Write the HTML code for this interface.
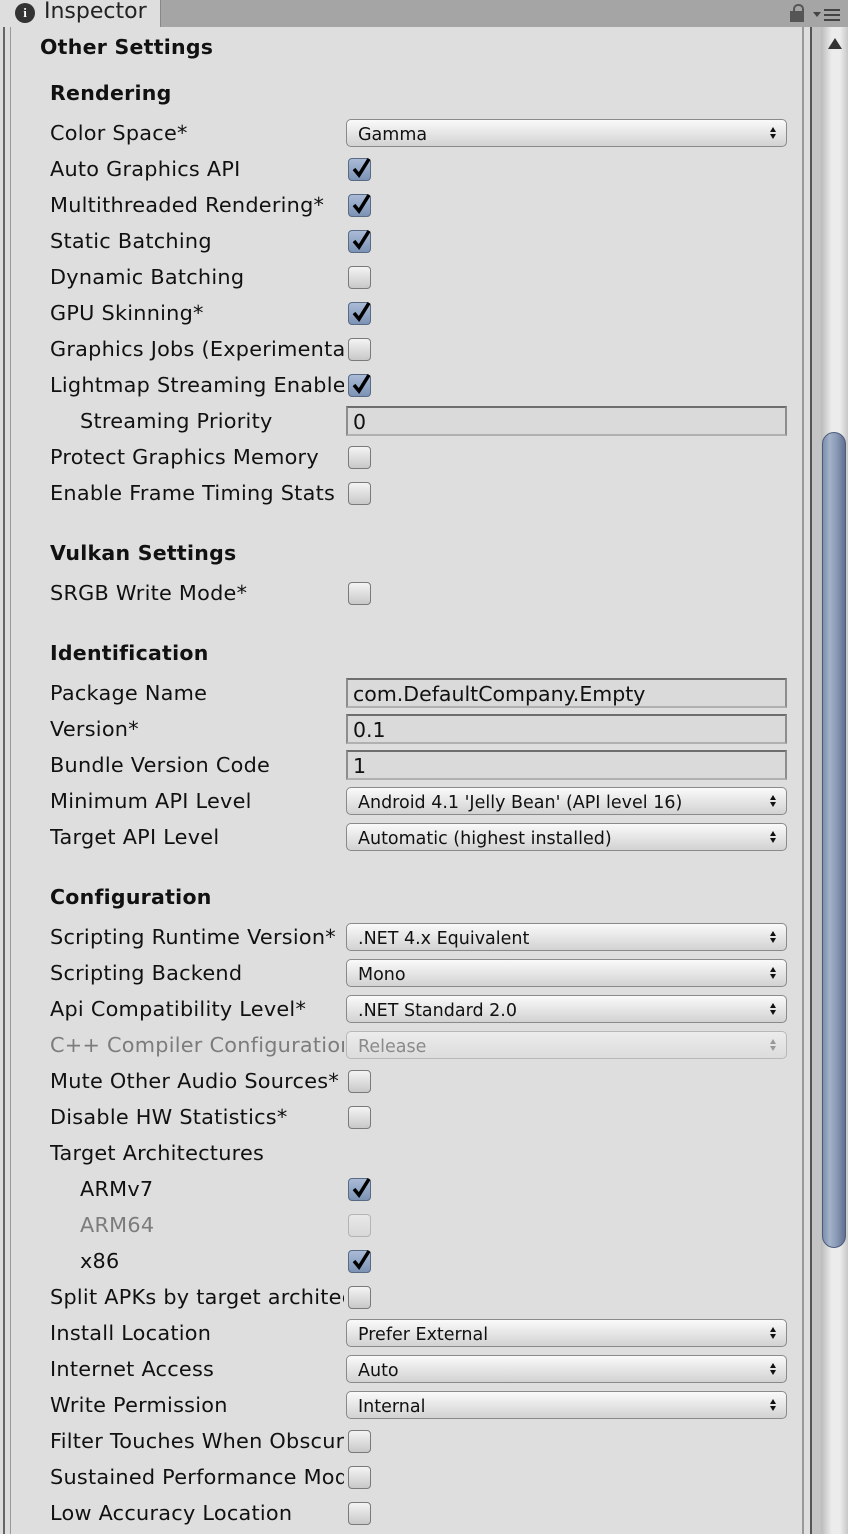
<!DOCTYPE html><html><head><style>
body{margin:0;width:848px;height:1534px;overflow:hidden;background:#dedede;font-family:"DejaVu Sans","Liberation Sans",sans-serif;position:relative}
.a{position:absolute}
.l{position:absolute;left:50px;width:294px;overflow:hidden;white-space:nowrap;font-size:20.8px;letter-spacing:0.25px;color:#111;height:32px;line-height:32px}
.b{font-weight:bold;font-size:20.5px}
.d{color:#7c7c7c}
.cb{position:absolute;left:348px;width:21px;height:21px;border:1px solid #7a7a7a;border-radius:4px;background:linear-gradient(#f4f4f4,#c8c8c8)}
.cb.on{background:linear-gradient(#a9bbd6,#7d93b6);border-color:#5a6a85}
.cb.dis{border-color:#b4b4b4;background:linear-gradient(#e8e8e8,#d8d8d8)}
.cb svg{position:absolute;left:1px;top:-3px}
.dd{position:absolute;left:346px;width:428px;height:26px;border:1px solid #8a8a8a;border-radius:5px;background:linear-gradient(#fafafa,#e2e2e2 60%,#d2d2d2);font-size:17.5px;line-height:30px;padding-left:11px;color:#111;overflow:hidden}
.dd.dis{color:#8a8a8a;border-color:#b8b8b8;background:linear-gradient(#ececec,#dcdcdc)}
.dd:after{content:"";position:absolute;right:10px;top:7px;width:0;height:0;border-left:3.5px solid transparent;border-right:3.5px solid transparent;border-bottom:5px solid #111}
.dd:before{content:"";position:absolute;right:10px;top:14px;width:0;height:0;border-left:3.5px solid transparent;border-right:3.5px solid transparent;border-top:5px solid #111}
.dd.dis:after{border-bottom-color:#999}.dd.dis:before{border-top-color:#999}
.tf{position:absolute;left:346px;width:432px;height:26px;border:2px solid #8d8d8d;border-top-color:#6e6e6e;border-bottom-color:#b0b0b0;background:#dadada;font-size:20.5px;line-height:28px;padding-left:5px;color:#111;overflow:hidden}
</style></head><body>
<div class="a" style="left:0;top:0;width:848px;height:27px;background:#a5a5a5"></div>
<div class="a" style="left:0;top:0;width:160px;height:27px;background:#dedede;border-right:1px solid #888"></div>
<div class="a" style="left:15px;top:3px;width:20px;height:20px;border-radius:50%;background:#333;color:#fff;font:bold 13px 'Liberation Serif',serif;text-align:center;line-height:20px">i</div>
<div class="a" style="left:44px;top:-2px;font-size:22px;color:#222;line-height:28px">Inspector</div>
<div class="a" style="left:790px;top:11px;width:14px;height:11px;background:#555"></div>
<div class="a" style="left:793px;top:4px;width:7px;height:8px;border:2px solid #555;border-bottom:none;border-radius:5px 5px 0 0"></div>
<div class="a" style="left:813px;top:12px;width:0;height:0;border-left:4px solid transparent;border-right:4px solid transparent;border-top:5px solid #444"></div>
<div class="a" style="left:824px;top:9px;width:16px;height:2px;background:#444;box-shadow:0 5px 0 #444,0 10px 0 #444"></div>
<div class="a" style="left:3px;top:27px;width:2px;height:1507px;background:#666"></div>
<div class="a" style="left:10px;top:27px;width:1px;height:1507px;background:#999"></div>
<div class="a" style="left:802px;top:27px;width:2px;height:1507px;background:#999"></div>
<div class="a" style="left:810px;top:27px;width:2px;height:1507px;background:#555"></div>
<div class="a" style="left:812px;top:27px;width:9px;height:1507px;background:#c4c4c4"></div>
<div class="a" style="left:821px;top:27px;width:27px;height:1507px;background:linear-gradient(90deg,#bbb,#ececec 40%,#ececec 70%,#c8c8c8)"></div>
<div class="a" style="left:828px;top:38px;width:0;height:0;border-left:7px solid transparent;border-right:7px solid transparent;border-bottom:11px solid #333"></div>
<div class="a" style="left:822px;top:432px;width:22px;height:814px;border:1px solid #4c5d7c;border-radius:12px;background:linear-gradient(90deg,#7b8dab,#a3b2c9 30%,#8c9cb7 60%,#5f7091)"></div>
<div class="l b" style="left:40px;top:31px">Other Settings</div>
<div class="l b" style="top:77px">Rendering</div>
<div class="l" style="top:117px">Color Space*</div><div class="dd" style="top:119px">Gamma</div>
<div class="l" style="top:153px">Auto Graphics API</div><div class="cb on" style="top:158px"><svg width="22" height="24"><path d="M4 13 L9 19 L19 3" stroke="#000" stroke-width="3.5" fill="none"/></svg></div>
<div class="l" style="top:189px">Multithreaded Rendering*</div><div class="cb on" style="top:194px"><svg width="22" height="24"><path d="M4 13 L9 19 L19 3" stroke="#000" stroke-width="3.5" fill="none"/></svg></div>
<div class="l" style="top:225px">Static Batching</div><div class="cb on" style="top:230px"><svg width="22" height="24"><path d="M4 13 L9 19 L19 3" stroke="#000" stroke-width="3.5" fill="none"/></svg></div>
<div class="l" style="top:261px">Dynamic Batching</div><div class="cb" style="top:266px"></div>
<div class="l" style="top:297px">GPU Skinning*</div><div class="cb on" style="top:302px"><svg width="22" height="24"><path d="M4 13 L9 19 L19 3" stroke="#000" stroke-width="3.5" fill="none"/></svg></div>
<div class="l" style="top:333px">Graphics Jobs (Experimental)</div><div class="cb" style="top:338px"></div>
<div class="l" style="top:369px">Lightmap Streaming Enabled</div><div class="cb on" style="top:374px"><svg width="22" height="24"><path d="M4 13 L9 19 L19 3" stroke="#000" stroke-width="3.5" fill="none"/></svg></div>
<div class="l" style="top:405px;left:80px;width:264px">Streaming Priority</div><div class="tf" style="top:406px">0</div>
<div class="l" style="top:441px">Protect Graphics Memory</div><div class="cb" style="top:446px"></div>
<div class="l" style="top:477px">Enable Frame Timing Stats</div><div class="cb" style="top:482px"></div>
<div class="l b" style="top:537px">Vulkan Settings</div>
<div class="l" style="top:577px">SRGB Write Mode*</div><div class="cb" style="top:582px"></div>
<div class="l b" style="top:637px">Identification</div>
<div class="l" style="top:677px">Package Name</div><div class="tf" style="top:678px">com.DefaultCompany.Empty</div>
<div class="l" style="top:713px">Version*</div><div class="tf" style="top:714px">0.1</div>
<div class="l" style="top:749px">Bundle Version Code</div><div class="tf" style="top:750px">1</div>
<div class="l" style="top:785px">Minimum API Level</div><div class="dd" style="top:787px">Android 4.1 'Jelly Bean' (API level 16)</div>
<div class="l" style="top:821px">Target API Level</div><div class="dd" style="top:823px">Automatic (highest installed)</div>
<div class="l b" style="top:881px">Configuration</div>
<div class="l" style="top:921px">Scripting Runtime Version*</div><div class="dd" style="top:923px">.NET 4.x Equivalent</div>
<div class="l" style="top:957px">Scripting Backend</div><div class="dd" style="top:959px">Mono</div>
<div class="l" style="top:993px">Api Compatibility Level*</div><div class="dd" style="top:995px">.NET Standard 2.0</div>
<div class="l d" style="top:1029px">C++ Compiler Configuration</div><div class="dd dis" style="top:1031px">Release</div>
<div class="l" style="top:1065px">Mute Other Audio Sources*</div><div class="cb" style="top:1070px"></div>
<div class="l" style="top:1101px">Disable HW Statistics*</div><div class="cb" style="top:1106px"></div>
<div class="l" style="top:1137px">Target Architectures</div>
<div class="l" style="top:1173px;left:80px;width:264px">ARMv7</div><div class="cb on" style="top:1178px"><svg width="22" height="24"><path d="M4 13 L9 19 L19 3" stroke="#000" stroke-width="3.5" fill="none"/></svg></div>
<div class="l d" style="top:1209px;left:80px;width:264px">ARM64</div><div class="cb dis" style="top:1214px"></div>
<div class="l" style="top:1245px;left:80px;width:264px">x86</div><div class="cb on" style="top:1250px"><svg width="22" height="24"><path d="M4 13 L9 19 L19 3" stroke="#000" stroke-width="3.5" fill="none"/></svg></div>
<div class="l" style="top:1281px">Split APKs by target architecture</div><div class="cb" style="top:1286px"></div>
<div class="l" style="top:1317px">Install Location</div><div class="dd" style="top:1319px">Prefer External</div>
<div class="l" style="top:1353px">Internet Access</div><div class="dd" style="top:1355px">Auto</div>
<div class="l" style="top:1389px">Write Permission</div><div class="dd" style="top:1391px">Internal</div>
<div class="l" style="top:1425px">Filter Touches When Obscured</div><div class="cb" style="top:1430px"></div>
<div class="l" style="top:1461px">Sustained Performance Mode</div><div class="cb" style="top:1466px"></div>
<div class="l" style="top:1497px">Low Accuracy Location</div><div class="cb" style="top:1502px"></div>
</body></html>
